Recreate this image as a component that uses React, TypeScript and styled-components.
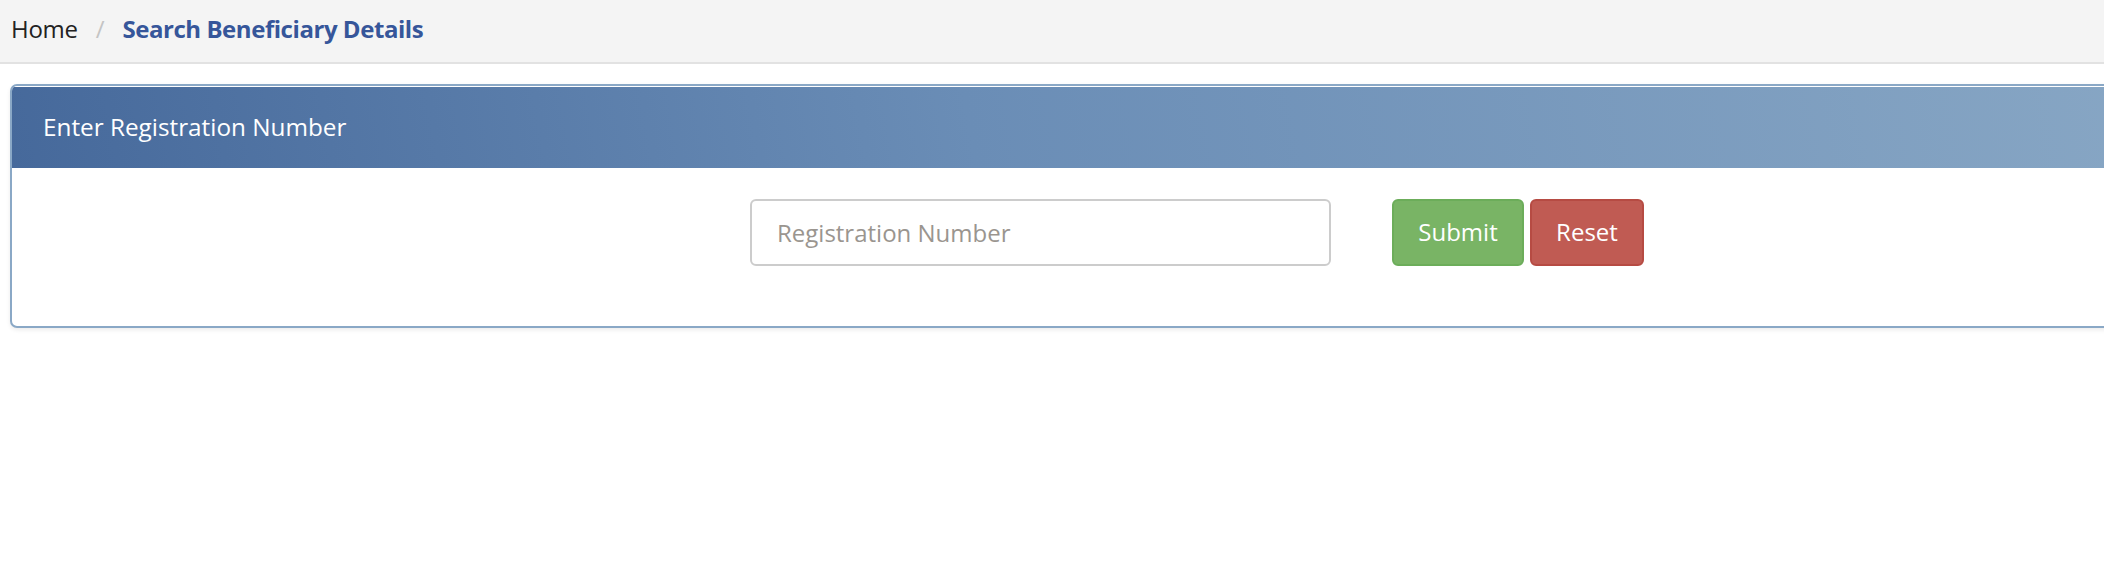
import React from "react";
import styled, { createGlobalStyle } from "styled-components";

const Global = createGlobalStyle`
  html, body {
    margin: 0;
    padding: 0;
    background: #ffffff;
    overflow: hidden;
  }
  body {
    font-family: "Open Sans", "Noto Sans", Arial, sans-serif;
  }
  * { box-sizing: border-box; }
`;

const Page = styled.div`
  width: 100%;
  min-height: 578px;
  background: #ffffff;
`;

const Breadcrumb = styled.nav`
  height: 64px;
  background: #f4f4f4;
  border-bottom: 2px solid #e2e2e2;
  display: flex;
  align-items: center;
  padding: 0 0 6px 11px;
  font-size: 24px;
`;

const Crumb = styled.span<{ $active?: boolean }>`
  color: ${(p) => (p.$active ? "#36569a" : "#222222")};
  font-weight: ${(p) => (p.$active ? 700 : 400)};
  letter-spacing: ${(p) => (p.$active ? "-0.45px" : "-0.3px")};
`;

const Sep = styled.span`
  color: #c4c4c4;
  padding: 0 18px 0 18px;
`;

const Content = styled.div`
  padding: 20px 0 0 10px;
`;

const Panel = styled.section`
  margin-right: -40px;
  border: 2px solid #8aa8c6;
  border-radius: 7px;
  background: #ffffff;
  box-shadow: 0 2px 4px rgba(0, 0, 0, 0.08);
  overflow: hidden;
`;

const PanelHeader = styled.header`
  height: 81px;
  margin-top: 1px;
  display: flex;
  align-items: center;
  padding: 0 0 3px 31px;
  background: linear-gradient(80deg, #46699b 0%, #6a8db6 45%, #87a6c4 100%);
  color: #ffffff;
  font-size: 24.3px;
`;

const PanelBody = styled.div`
  height: 158px;
  display: flex;
  align-items: flex-start;
  padding: 31px 0 0 738px;
`;

const Input = styled.input`
  width: 581px;
  height: 67px;
  border: 2px solid #cccccc;
  border-radius: 6px;
  padding: 0 0 0 25px;
  font-family: "Open Sans", "Noto Sans", Arial, sans-serif;
  font-size: 24px;
  color: #555;
  outline: none;
  &::placeholder {
    color: #9a958f;
  }
`;

const Actions = styled.div`
  display: flex;
  gap: 6px;
  margin-left: 61px;
`;

const Button = styled.button<{ $variant: "success" | "danger"; $w: number }>`
  width: ${(p) => p.$w}px;
  height: 67px;
  border-radius: 6px;
  border: 2px solid ${(p) => (p.$variant === "success" ? "#6cad5a" : "#b64b43")};
  background: ${(p) => (p.$variant === "success" ? "#79b465" : "#c05b53")};
  color: #ffffff;
  font-family: "Open Sans", "Noto Sans", Arial, sans-serif;
  font-size: 24px;
  padding: 0 0 3px;
  cursor: pointer;
`;

export default function App() {
  return (
    <Page>
      <Global />
      <Breadcrumb>
        <Crumb>Home</Crumb>
        <Sep>/</Sep>
        <Crumb $active>Search Beneficiary Details</Crumb>
      </Breadcrumb>
      <Content>
        <Panel>
          <PanelHeader>Enter Registration Number</PanelHeader>
          <PanelBody>
            <Input placeholder="Registration Number" />
            <Actions>
              <Button $variant="success" $w={132}>Submit</Button>
              <Button $variant="danger" $w={114}>Reset</Button>
            </Actions>
          </PanelBody>
        </Panel>
      </Content>
    </Page>
  );
}
